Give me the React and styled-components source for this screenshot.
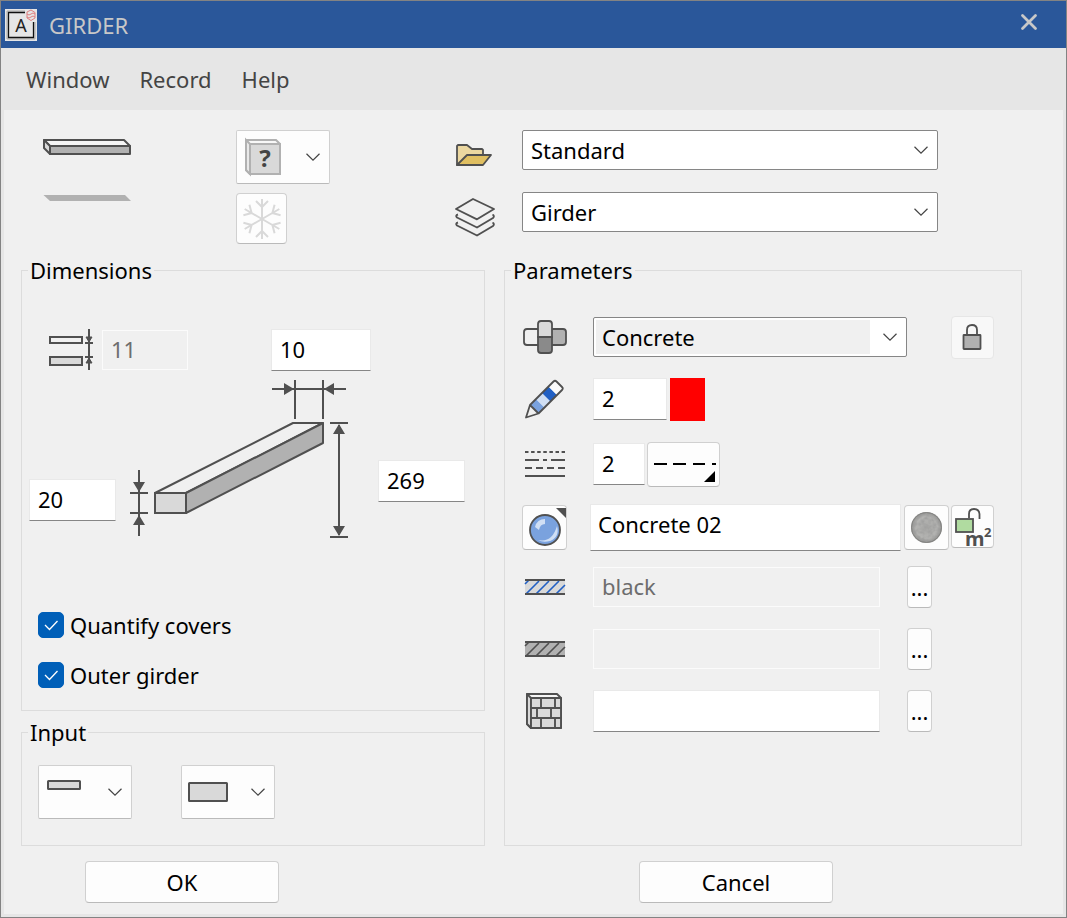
import React from 'react'
import styled, { createGlobalStyle, css } from 'styled-components'

const GlobalStyle = createGlobalStyle`
    * {
        box-sizing: border-box;
    }
    body {
        margin: 0;
        background-color: #f0f0f0;
    }
    body, button, input, select {
        font-family: 'Noto Sans', 'Open Sans', sans-serif;
        font-size: 22px;
        line-height: 32px;
        color: #000;
    }
    svg {
        display: block;
        flex: none;
        overflow: visible;
    }
`

const Dialog = styled.div`
    display: flex;
    flex-direction: column;
    min-height: 100vh;
    border: 1px solid #838383;
    background-color: #e6e6e6;
`
const TitleBar = styled.header`
    display: flex;
    align-items: center;
    gap: 12px;
    height: 47px;
    padding: 0 28px 0 4px;
    background-color: #2a579a;
`
const Title = styled.h1`
    flex: 1;
    margin: 0;
    font-size: 22px;
    font-weight: 400;
    color: #c8c8c8;
`
const CloseButton = styled.button`
    align-self: flex-start;
    padding: 12px 0 0;
    border: none;
    background: none;
    cursor: pointer;
`
const MenuBar = styled.nav`
    display: flex;
    align-items: center;
    gap: 30px;
    height: 62px;
    padding: 0 25px;
`
const MenuItem = styled.button`
    padding: 0;
    border: none;
    background: none;
    color: #444;
    cursor: pointer;
`
const Content = styled.main`
    flex: 1;
    margin: 0 3px 3px;
    padding: 20px 41px 11px 17px;
    background-color: #f0f0f0;
`
const TopArea = styled.div`
    display: grid;
    grid-template-columns: 434fr 567fr;
    margin-bottom: 10px;
`
const Preview = styled.div`
    display: flex;
    gap: 104px;
    padding-left: 22px;
`
const PreviewShapes = styled.div`
    display: flex;
    flex-direction: column;
    gap: 39px;
    padding-top: 9px;
`
const PreviewButtons = styled.div`
    display: flex;
    flex-direction: column;
    gap: 9px;
`
const Presets = styled.div`
    display: flex;
    flex-direction: column;
    gap: 22px;
    padding-right: 84px;
`
const PresetRow = styled.div`
    display: flex;
    align-items: center;
    gap: 27px;
    height: 40px;
`
const PresetIcon = styled.div`
    flex: none;
    width: 40px;
    padding-top: 10px;
`
const Columns = styled.div`
    display: grid;
    grid-template-columns: 464fr 518fr;
    column-gap: 19px;
`
const Stack = styled.div`
    display: flex;
    flex-direction: column;
    gap: 5px;
`
const Group = styled.fieldset`
    min-width: 0;
    margin: 0;
    padding: 0;
    border: 1px solid #dcdcdc;
`
const Legend = styled.legend`
    margin-left: 6px;
    padding: 0 2px;
`
const LevelRow = styled.div`
    display: flex;
    align-items: center;
    gap: 8px;
    padding: 42px 0 0 27px;
`
const WidthCell = styled.div`
    padding-left: 75px;
`
const GirderRow = styled.div`
    display: flex;
    align-items: flex-start;
    padding: 7px 0 0 7px;
`
const SizeCell = styled.div`
    padding-top: ${props => props.$top}px;
    margin: 0 ${props => props.$right || 0}px 0 ${props => props.$left || 0}px;
`
const CheckList = styled.div`
    padding: 60px 0 10px 16px;
`
const CheckLabel = styled.label`
    display: flex;
    align-items: center;
    gap: 6px;
    height: 50px;
    cursor: pointer;
`
const CheckBox = styled.input`
    appearance: none;
    width: 26px;
    height: 26px;
    margin: 0;
    border: 1px solid #868686;
    border-radius: 5px;
    background-color: #fff;
    &:checked {
        border-color: #005fb8;
        background: #005fb8 url("data:image/svg+xml,%3Csvg xmlns='http://www.w3.org/2000/svg' viewBox='0 0 24 24'%3E%3Cpath d='M6 12l4.500 4.500L18.500 8' fill='none' stroke='white' stroke-width='1.300'/%3E%3C/svg%3E") center / 24px 24px no-repeat;
    }
`
const InputRow = styled.div`
    display: flex;
    gap: 49px;
    padding: 17px 0 26px 16px;
`
const ParamList = styled.div`
    display: grid;
    grid-template-rows: 62px 62px 68px 58px 62px 62px 62px;
    padding: 20px 27px 0 17px;
`
const ParamRow = styled.div`
    display: flex;
    align-items: center;
    padding-right: ${props => props.$short ? '62px' : '0'};
`
const IconCell = styled.div`
    display: flex;
    flex: none;
    justify-content: center;
    width: 45px;
    margin-right: ${props => props.$tight ? '23px' : '26px'};
`
const Tail = styled.div`
    display: flex;
    flex: none;
    gap: 2px;
    margin-left: ${props => props.$gap}px;
`
const TextField = styled.input`
    width: ${props => props.$width ? props.$width + 'px' : '100%'};
    min-width: 0;
    flex: ${props => props.$width ? 'none' : '1'};
    height: ${props => props.$tall ? '47px' : '42px'};
    padding: ${props => props.$tall ? '0 7px 6px' : '0 8px 2px'};
    border: 1px solid #e9e9e9;
    border-bottom-color: #868686;
    border-radius: 0;
    background-color: #fff;
    outline: none;
    &:disabled {
        height: 40px;
        border-color: #fbfbfb;
        background-color: #f0f0f0;
        color: #6d6d6d;
    }
`
const raised = css`
    border: 1px solid #d0d0d0;
    border-bottom-color: #bababa;
    background-color: #fdfdfd;
    cursor: pointer;
`
const PickButton = styled.button`
    ${raised}
    display: flex;
    align-items: center;
    justify-content: space-between;
    width: 94px;
    height: 54px;
    padding: 0 9px 0 6px;
    border-radius: 2px;
`
const ToolButton = styled.button`
    ${raised}
    display: flex;
    flex: none;
    align-items: center;
    justify-content: center;
    width: ${props => props.$width}px;
    height: ${props => props.$height}px;
    padding: 0;
    border-radius: 4px;
    &:disabled {
        border-color: #e6e6e6;
        background-color: #f8f8f8;
    }
`
const ColorSwatch = styled.button`
    width: 35px;
    height: 43px;
    padding: 0;
    border: none;
    background-color: #f00;
    cursor: pointer;
`
const SelectBox = styled.div`
    display: grid;
    flex: 1;
    min-width: 0;
    align-items: center;
    svg {
        grid-area: 1 / 1;
        justify-self: end;
        margin-right: 10px;
        pointer-events: none;
    }
`
const Select = styled.select`
    grid-area: 1 / 1;
    appearance: none;
    width: 100%;
    height: 40px;
    padding: 0 36px 0 8px;
    border: 1px solid #868686;
    border-radius: 2px;
    background: #fff;
    outline: none;
    ${props => props.$shaded && css`
        background: linear-gradient(#f0f0f0, #f0f0f0) 2px 2px / calc(100% - 38px) calc(100% - 4px) no-repeat, #fff;
    `}
`
const Footer = styled.footer`
    display: grid;
    grid-template-columns: 464fr 518fr;
    column-gap: 19px;
    margin-top: 15px;
`
const FooterCell = styled.div`
    padding-left: ${props => props.$left}px;
`
const ActionButton = styled.button`
    ${raised}
    width: 194px;
    height: 42px;
    padding: 0;
    border-radius: 4px;
`

const DARK = '#505050'
const MID = '#b1b1b1'
const LIGHT = '#d9d9d9'

const Chevron = () => (
    <svg width="14" height="8" viewBox="0 0 14 8">
        <path d="M0.500 0.800L7 7.200L13.500 0.800" fill="none" stroke="#444" strokeWidth="1.200" />
    </svg>
)

const AppIcon = () => (
    <svg width="32" height="32" viewBox="0 0 32 32">
        <rect width="32" height="32" fill="#e6e6e6" />
        <path d="M2 2H20M2 2V30H30V13" fill="none" stroke="#aaa" />
        <path d="M20 3.500H3.500V28.500H28.500V13" fill="none" stroke="#111" strokeWidth="1.300" />
        <text x="16" y="23" textAnchor="middle" fontSize="18" fill="#222">A</text>
        <g fill="none" stroke="#e08080" strokeWidth="1">
            <path d="M22 3L26 1L30 3.500V9L26 11.500L22 9Z" />
            <path d="M22 5Q24 7 26 5T30 5M22 8Q24 10 26 8T30 8" />
        </g>
    </svg>
)

const CloseIcon = () => (
    <svg width="18" height="18" viewBox="0 0 18 18">
        <path d="M2.500 2.500L15.500 15.500M15.500 2.500L2.500 15.500" stroke="#c8c8c8" strokeWidth="2.800" strokeLinecap="round" />
    </svg>
)

const BeamIcon = () => (
    <svg width="89" height="17" viewBox="0 0 89 17" stroke={DARK} strokeWidth="2" strokeLinejoin="round">
        <path d="M1 1H81L87 7H7Z" fill="#f5f5f5" />
        <path d="M1 1L7 7V15L1 9Z" fill={LIGHT} />
        <path d="M7 7H87V15H7Z" fill={MID} />
    </svg>
)

const BeamShadow = () => (
    <svg width="89" height="6" viewBox="0 0 89 6">
        <path d="M0.500 0H82L88 6H7Z" fill={MID} />
    </svg>
)

const UnknownBlockIcon = () => (
    <svg width="38" height="36" viewBox="-2 0 38 36">
        <path d="M1 1H31L35 5V35H5L1 31Z" fill="#f8f8f8" stroke={MID} strokeWidth="2" />
        <path d="M1 1L5 5V35L1 31Z" fill="#e9e9e9" stroke={MID} strokeWidth="2" />
        <rect x="5" y="5" width="30" height="30" fill={LIGHT} stroke={MID} strokeWidth="2" />
        <text x="20" y="28" textAnchor="middle" fontSize="24" fontWeight="700" fill="#444">?</text>
    </svg>
)

const SnowflakeIcon = () => (
    <svg width="42" height="42" viewBox="-21 -21 42 42" fill="none" stroke={LIGHT} strokeWidth="2">
        {[0, 60, 120, 180, 240, 300].map(angle => (
            <path key={angle} d="M0 0V-20M-6 -18L0 -12L6 -18" transform={`rotate(${angle})`} />
        ))}
    </svg>
)

const FolderIcon = () => (
    <svg width="39" height="24" viewBox="-1 -1 39 24" stroke={DARK} strokeWidth="1.800" strokeLinejoin="round">
        <path d="M1 21V2L2 1H11L16 5H26L27 6V12L12 14Z" fill="#ebd7a0" />
        <path d="M1 21L11 11H35L27 21Z" fill="#e0bf61" />
    </svg>
)

const LayersIcon = () => (
    <svg width="40" height="39" viewBox="0 0 40 39" fill="none" stroke={DARK} strokeWidth="1.900" strokeLinejoin="round">
        <path d="M18 1L39 11L22 21.300L1 11Z" />
        <path d="M3 16.500Q0 17.500 2 19.500L22 29.500L38 20Q40 18 37.500 16.500" />
        <path d="M3 24.500Q0 25.500 2 27.500L22 37.500L38 28Q40 26 37.500 24.500" />
    </svg>
)

const LevelIcon = () => (
    <svg width="45" height="43" viewBox="0 0 45 43" stroke={DARK} strokeWidth="2">
        <rect x="1" y="9" width="32" height="6" fill="none" />
        <rect x="1" y="29" width="32" height="8" fill={LIGHT} />
        <path d="M40 1V42M36 15H44M36 29H44" />
        <path d="M37 9H43L40 14Z M37 35H43L40 30Z" fill={DARK} strokeWidth="1" />
    </svg>
)

const GirderDrawing = () => (
    <svg width="220" height="162" viewBox="0 0 220 162">
        <g stroke={DARK} strokeWidth="2" fill="none">
            <path d="M25 115L163 45H193L56 115Z" strokeLinejoin="round" />
            <path d="M56 115L193 45V65L56 135Z" fill={MID} strokeLinejoin="round" />
            <path d="M25 115H56V135H25Z" fill={LIGHT} />
            <path d="M0 115H18M0 135H18M9 92V158" />
            <path d="M165 2V41M193 2V41M142 11H216" />
            <path d="M200 45H218M200 159H218M209 47V157" />
        </g>
        <g fill={DARK}>
            <path d="M3 104H15L9 114Z M3 147H15L9 137Z" />
            <path d="M154 5V17L164 11Z M204 5V17L194 11Z" />
            <path d="M203 56H215L209 46Z M203 148H215L209 158Z" />
        </g>
    </svg>
)

const FlatSlabIcon = () => (
    <svg width="38" height="36" viewBox="-2 0 38 36">
        <rect x="1" y="7" width="32" height="8" rx="0.500" fill={LIGHT} stroke={DARK} strokeWidth="2" />
    </svg>
)

const ThickSlabIcon = () => (
    <svg width="40" height="20" viewBox="0 0 40 20">
        <rect x="1" y="1" width="38" height="18" rx="0.500" fill={LIGHT} stroke={DARK} strokeWidth="2" />
    </svg>
)

const JointIcon = () => (
    <svg width="44" height="34" viewBox="0 0 44 34" stroke={DARK} strokeWidth="1.800">
        <path d="M15 9H4Q1 9 1 12V22Q1 25 4 25H15" fill="none" />
        <path d="M29 9H40Q43 9 43 12V22Q43 25 40 25H29" fill={MID} />
        <path d="M15 17V4Q15 1 18 1H26Q29 1 29 4V17Z" fill={LIGHT} />
        <path d="M15 17V30Q15 33 18 33H26Q29 33 29 30V17Z" fill="#8a8a8a" />
    </svg>
)

const PencilIcon = () => (
    <svg width="39" height="40" viewBox="0 0 39 40">
        <path d="M5 26L11 20L19.500 28.500L13.500 34.500Z" fill="#7aa2de" />
        <path d="M11 20L17 14L25.500 22.500L19.500 28.500Z" fill="#d0dff4" />
        <path d="M17 14L23.500 7.500L32 16L25.500 22.500Z" fill="#2160c4" />
        <path d="M23.500 7.500L28.500 2.500Q30 1 31.500 2.500L37 8Q38.500 9.500 37 11L32 16Z" fill="#fafafa" />
        <path d="M1 38.500L5 26L28.500 2.500Q30 1 31.500 2.500L37 8Q38.500 9.500 37 11L13.500 34.500ZM5 26L13.500 34.500" fill="none" stroke={DARK} strokeWidth="1.800" strokeLinejoin="round" />
    </svg>
)

const LineTypesIcon = () => (
    <svg width="40" height="28" viewBox="0 0 40 28" stroke={DARK} strokeWidth="2">
        <path d="M0 2H40" strokeDasharray="3.500 2.600" />
        <path d="M0 10H14M18 10H22M26 10H40" />
        <path d="M0 18H40" strokeDasharray="7 4" />
        <path d="M0 26H40" />
    </svg>
)

const DashSample = () => (
    <svg width="71" height="43" viewBox="0 0 71 43">
        <path d="M6 21H19M25 21H38M45 21H57M64 21H68" stroke="#000" strokeWidth="2" />
        <path d="M56 39H67V28Z" fill="#000" />
    </svg>
)

const SurfaceIcon = () => (
    <svg width="43" height="43" viewBox="0 0 43 43">
        <circle cx="22" cy="24" r="15" fill="#7aa2de" stroke={DARK} strokeWidth="1.800" />
        <path d="M12 21Q14 13 22 13V18Q17 18 16 24Z" fill="#d0dff4" />
        <path d="M34 20Q37 31 27 35Q20 37 15 34Q29 37 34 20Z" fill="#d0dff4" />
        <path d="M33 2H43V12Z" fill={DARK} />
    </svg>
)

const ConcreteBall = () => (
    <svg width="43" height="43" viewBox="0 0 43 43">
        <defs>
            <radialGradient id="ball">
                <stop offset="0" stopColor="#a8a8a6" />
                <stop offset="0.700" stopColor="#b4b4b2" />
                <stop offset="1" stopColor="#929290" />
            </radialGradient>
            <filter id="grain">
                <feTurbulence type="fractalNoise" baseFrequency="0.250" numOctaves="3" />
                <feColorMatrix values="0 0 0 0 0.300  0 0 0 0 0.300  0 0 0 0 0.300  1.200 0 0 0 -0.400" />
                <feComposite in2="SourceGraphic" operator="in" />
            </filter>
        </defs>
        <circle cx="21.500" cy="21.500" r="15.500" fill="url(#ball)" />
        <circle cx="21.500" cy="21.500" r="15.500" filter="url(#grain)" />
        <circle cx="21.500" cy="21.500" r="15" fill="none" stroke="#858583" />
    </svg>
)

const LockIcon = () => (
    <svg width="20" height="26" viewBox="1 0 20 26" stroke={DARK} strokeWidth="1.800">
        <path d="M5 11V6Q5 1 10 1T15 6V11" fill="none" />
        <rect x="1.500" y="11" width="17" height="14" rx="0.500" fill={MID} />
    </svg>
)

const UnlockAreaIcon = () => (
    <svg width="41" height="41" viewBox="0 0 41 41">
        <path d="M17 12V8Q17 3 22 3T27.500 8V13" fill="none" stroke={DARK} strokeWidth="1.800" />
        <rect x="4" y="13" width="17" height="13" fill="#b0dba0" stroke={DARK} strokeWidth="1.800" />
        <text x="13" y="40" fontSize="20" fontWeight="700" fill={DARK}>m</text>
        <text x="32" y="31" fontSize="13" fontWeight="700" fill={DARK}>2</text>
    </svg>
)

const HatchIcon = ({ fill, line }) => (
    <svg width="40" height="16" viewBox="0 0 40 16">
        <rect width="40" height="16" fill={fill} />
        <path d="M0 5L4 1M1 15L14 2M11 15L24 2M21 15L34 2M31 15L40 6" stroke={line} strokeWidth="1.600" />
        <path d="M0 1H40M0 15H40" stroke={DARK} strokeWidth="2" />
    </svg>
)

const WallIcon = () => (
    <svg width="37" height="37" viewBox="0 0 37 37" stroke={DARK} strokeWidth="1.900" strokeLinejoin="round">
        <path d="M1 1H31L35 5V35H5L1 31Z" fill="#f5f5f5" />
        <path d="M1 1L5 5V35L1 31Z" fill={LIGHT} />
        <rect x="5" y="5" width="30" height="30" fill={LIGHT} />
        <path d="M5 15H35M5 25H35M15 5V15M29 5V15M11 15V25M25 15V25M15 25V35M29 25V35" />
    </svg>
)

const DropDown = ({ label, value, shaded }) => (
    <SelectBox>
        <Select aria-label={label} defaultValue={value} $shaded={shaded}>
            <option>{value}</option>
        </Select>
        <Chevron />
    </SelectBox>
)

const BrowseButton = ({ label }) => (
    <Tail $gap={27}>
        <ToolButton type="button" aria-label={label} $width={25} $height={42}>...</ToolButton>
    </Tail>
)

const Dimensions = () => (
    <Group>
        <Legend>Dimensions</Legend>
        <LevelRow>
            <LevelIcon />
            <TextField aria-label="Level" defaultValue="11" $width={86} disabled />
            <WidthCell>
                <TextField aria-label="Width" defaultValue="10" $width={100} />
            </WidthCell>
        </LevelRow>
        <GirderRow>
            <SizeCell $top={101} $right={14}>
                <TextField aria-label="Thickness" defaultValue="20" $width={87} />
            </SizeCell>
            <GirderDrawing />
            <SizeCell $top={82} $left={28}>
                <TextField aria-label="Height" defaultValue="269" $width={87} />
            </SizeCell>
        </GirderRow>
        <CheckList>
            <CheckLabel>
                <CheckBox type="checkbox" defaultChecked />
                Quantify covers
            </CheckLabel>
            <CheckLabel>
                <CheckBox type="checkbox" defaultChecked />
                Outer girder
            </CheckLabel>
        </CheckList>
    </Group>
)

const InputGroup = () => (
    <Group>
        <Legend>Input</Legend>
        <InputRow>
            <PickButton type="button" aria-label="Edge">
                <FlatSlabIcon />
                <Chevron />
            </PickButton>
            <PickButton type="button" aria-label="Area">
                <ThickSlabIcon />
                <Chevron />
            </PickButton>
        </InputRow>
    </Group>
)

const Parameters = () => (
    <Group>
        <Legend>Parameters</Legend>
        <ParamList>
            <ParamRow>
                <IconCell><JointIcon /></IconCell>
                <DropDown label="Material" value="Concrete" shaded />
                <Tail $gap={44}>
                    <ToolButton type="button" aria-label="Lock" $width={43} $height={43} disabled>
                        <LockIcon />
                    </ToolButton>
                </Tail>
            </ParamRow>
            <ParamRow>
                <IconCell><PencilIcon /></IconCell>
                <TextField aria-label="Pen" defaultValue="2" $width={74} />
                <Tail $gap={3}>
                    <ColorSwatch type="button" aria-label="Pen color" />
                </Tail>
            </ParamRow>
            <ParamRow>
                <IconCell><LineTypesIcon /></IconCell>
                <TextField aria-label="Line type" defaultValue="2" $width={52} />
                <Tail $gap={2}>
                    <ToolButton type="button" aria-label="Choose line type" $width={73} $height={45}>
                        <DashSample />
                    </ToolButton>
                </Tail>
            </ParamRow>
            <ParamRow>
                <IconCell $tight>
                    <ToolButton type="button" aria-label="Surface" $width={45} $height={45}>
                        <SurfaceIcon />
                    </ToolButton>
                </IconCell>
                <TextField aria-label="Surface name" defaultValue="Concrete 02" $tall />
                <Tail $gap={3}>
                    <ToolButton type="button" aria-label="Texture" $width={45} $height={45}>
                        <ConcreteBall />
                    </ToolButton>
                    <ToolButton type="button" aria-label="Unlock area" $width={43} $height={43}>
                        <UnlockAreaIcon />
                    </ToolButton>
                </Tail>
            </ParamRow>
            <ParamRow $short>
                <IconCell><HatchIcon fill={LIGHT} line="#2160c4" /></IconCell>
                <TextField aria-label="Hatching" defaultValue="black" disabled />
                <BrowseButton label="Choose hatching" />
            </ParamRow>
            <ParamRow $short>
                <IconCell><HatchIcon fill={MID} line={DARK} /></IconCell>
                <TextField aria-label="Section hatching" disabled />
                <BrowseButton label="Choose section hatching" />
            </ParamRow>
            <ParamRow $short>
                <IconCell><WallIcon /></IconCell>
                <TextField aria-label="Masonry" />
                <BrowseButton label="Choose masonry" />
            </ParamRow>
        </ParamList>
    </Group>
)

export default function App() {
    return (
        <>
            <GlobalStyle />
            <Dialog>
                <TitleBar>
                    <AppIcon />
                    <Title>GIRDER</Title>
                    <CloseButton type="button" aria-label="Close"><CloseIcon /></CloseButton>
                </TitleBar>
                <MenuBar>
                    <MenuItem type="button">Window</MenuItem>
                    <MenuItem type="button">Record</MenuItem>
                    <MenuItem type="button">Help</MenuItem>
                </MenuBar>
                <Content>
                    <TopArea>
                        <Preview>
                            <PreviewShapes>
                                <BeamIcon />
                                <BeamShadow />
                            </PreviewShapes>
                            <PreviewButtons>
                                <PickButton type="button" aria-label="Type">
                                    <UnknownBlockIcon />
                                    <Chevron />
                                </PickButton>
                                <ToolButton type="button" aria-label="Freeze" $width={51} $height={51}>
                                    <SnowflakeIcon />
                                </ToolButton>
                            </PreviewButtons>
                        </Preview>
                        <Presets>
                            <PresetRow>
                                <PresetIcon><FolderIcon /></PresetIcon>
                                <DropDown label="Record" value="Standard" />
                            </PresetRow>
                            <PresetRow>
                                <PresetIcon><LayersIcon /></PresetIcon>
                                <DropDown label="Layer" value="Girder" />
                            </PresetRow>
                        </Presets>
                    </TopArea>
                    <Columns>
                        <Stack>
                            <Dimensions />
                            <InputGroup />
                        </Stack>
                        <Parameters />
                    </Columns>
                    <Footer>
                        <FooterCell $left={64}>
                            <ActionButton type="button">OK</ActionButton>
                        </FooterCell>
                        <FooterCell $left={135}>
                            <ActionButton type="button">Cancel</ActionButton>
                        </FooterCell>
                    </Footer>
                </Content>
            </Dialog>
        </>
    )
}
